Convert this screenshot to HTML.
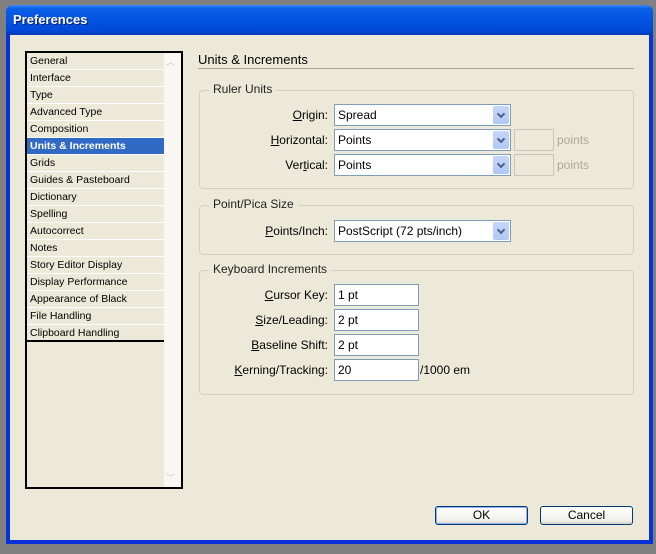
<!DOCTYPE html>
<html><head><style>
*{margin:0;padding:0;box-sizing:border-box}
body{width:656px;height:554px;background:#808080;position:relative;overflow:hidden;font-family:Tahoma,"DejaVu Sans","Liberation Sans",sans-serif;font-size:11px;color:#000}
.a{position:absolute}
#win{left:6px;top:5px;width:647px;height:539px;background:#0831d9;border-radius:7px 7px 0 0}
#title{left:6px;top:5px;width:647px;height:30px;border-radius:7px 7px 0 0;background:linear-gradient(#3d8bff 0,#0a5fe8 12%,#0454e2 50%,#0049d6 85%,#0039b8 100%)}
#title span{position:absolute;left:7px;top:7px;color:#fff;font-weight:bold;font-size:13px;font-family:"Liberation Sans",sans-serif;text-shadow:1px 1px #0a1e70}
#body{left:10px;top:35px;width:639px;height:505px;background:#ece9d8}
#list{left:25px;top:51px;width:158px;height:438px;border:2px solid #000;background:#ece9d8}
.it{position:absolute;left:0;width:137px;height:17px;line-height:16px;padding-left:3px;border-bottom:1px solid #fff;font-size:10.5px;font-family:"Liberation Sans",sans-serif}
.sel{background:#316ac5;color:#fff;font-weight:bold}
#sb{left:164px;top:53px;width:17px;height:434px;background:#f8f7f2}
.grp{position:absolute;border:1px solid #d0d0bf;border-radius:4px}
.gl{position:absolute;background:#ece9d8;padding:0 4px;font-size:12px;font-family:"Liberation Sans",sans-serif;color:#222}
.lb{position:absolute;text-align:right;width:200px;font-size:12px;font-family:"Liberation Sans",sans-serif}
.dd{position:absolute;background:#fff;border:1px solid #7f9db9;height:22px;font-size:12px;font-family:"Liberation Sans",sans-serif;padding:3px 3px}
.dd i{position:absolute;right:1px;top:1px;width:16px;height:18px;background:linear-gradient(#c6d6fb,#b0c8f6);border-radius:2px}
.dd i:after{content:"";position:absolute;left:5px;top:5px;width:4px;height:4px;border-right:2px solid #4d6185;border-bottom:2px solid #4d6185;transform:rotate(45deg)}
.tb{position:absolute;background:#fff;border:1px solid #7f9db9;height:22px;width:85px;font-size:12px;font-family:"Liberation Sans",sans-serif;padding:3px 3px}
.dis{position:absolute;border:1px solid #c9c7ba;width:40px;height:22px}
.gr{position:absolute;color:#aca899;font-size:12px;font-family:"Liberation Sans",sans-serif}
.btn{position:absolute;height:19px;border:1px solid #003c74;border-radius:3px;background:linear-gradient(#fff,#f0f0ea 80%,#d6d0c5);text-align:center;line-height:17px;font-size:12px;font-family:"Liberation Sans",sans-serif}
u{text-decoration:underline}
</style></head><body>
<div id="win" class="a"></div>
<div id="title" class="a"><span>Preferences</span></div>
<div id="body" class="a"></div>

<div id="list" class="a">
<div class="it" style="top:0">General</div>
<div class="it" style="top:17px">Interface</div>
<div class="it" style="top:34px">Type</div>
<div class="it" style="top:51px">Advanced Type</div>
<div class="it" style="top:68px">Composition</div>
<div class="it sel" style="top:85px">Units &amp; Increments</div>
<div class="it" style="top:102px">Grids</div>
<div class="it" style="top:119px">Guides &amp; Pasteboard</div>
<div class="it" style="top:136px">Dictionary</div>
<div class="it" style="top:153px">Spelling</div>
<div class="it" style="top:170px">Autocorrect</div>
<div class="it" style="top:187px">Notes</div>
<div class="it" style="top:204px">Story Editor Display</div>
<div class="it" style="top:221px">Display Performance</div>
<div class="it" style="top:238px">Appearance of Black</div>
<div class="it" style="top:255px">File Handling</div>
<div class="it" style="top:272px;border-bottom:2px solid #000">Clipboard Handling</div>
</div>
<div id="sb" class="a"><div class="a" style="left:2px;top:2px;color:#c8c8c0;font-size:9px">︿</div><div class="a" style="left:2px;bottom:3px;color:#c8c8c0;font-size:9px">﹀</div></div>

<div class="a" style="left:198px;top:52px;font-size:13px;font-family:'Liberation Sans',sans-serif">Units &amp; Increments</div>
<div class="a" style="left:198px;top:68px;width:436px;height:1px;background:#aca899"></div>

<div class="grp" style="left:199px;top:90px;width:435px;height:99px"></div>
<div class="gl" style="left:209px;top:82px">Ruler Units</div>
<div class="lb" style="left:128px;top:108px"><u>O</u>rigin:</div>
<div class="dd" style="left:334px;top:104px;width:177px">Spread<i></i></div>
<div class="lb" style="left:128px;top:133px"><u>H</u>orizontal:</div>
<div class="dd" style="left:334px;top:129px;width:177px">Points<i></i></div>
<div class="dis" style="left:514px;top:129px"></div><div class="gr" style="left:557px;top:133px">points</div>
<div class="lb" style="left:128px;top:158px">Ver<u>t</u>ical:</div>
<div class="dd" style="left:334px;top:154px;width:177px">Points<i></i></div>
<div class="dis" style="left:514px;top:154px"></div><div class="gr" style="left:557px;top:158px">points</div>

<div class="grp" style="left:199px;top:205px;width:435px;height:50px"></div>
<div class="gl" style="left:209px;top:197px">Point/Pica Size</div>
<div class="lb" style="left:128px;top:224px"><u>P</u>oints/Inch:</div>
<div class="dd" style="left:334px;top:220px;width:177px">PostScript (72 pts/inch)<i></i></div>

<div class="grp" style="left:199px;top:270px;width:435px;height:125px"></div>
<div class="gl" style="left:209px;top:262px">Keyboard Increments</div>
<div class="lb" style="left:128px;top:288px"><u>C</u>ursor Key:</div>
<div class="tb" style="left:334px;top:284px">1 pt</div>
<div class="lb" style="left:128px;top:313px"><u>S</u>ize/Leading:</div>
<div class="tb" style="left:334px;top:309px">2 pt</div>
<div class="lb" style="left:128px;top:338px"><u>B</u>aseline Shift:</div>
<div class="tb" style="left:334px;top:334px">2 pt</div>
<div class="lb" style="left:128px;top:363px"><u>K</u>erning/Tracking:</div>
<div class="tb" style="left:334px;top:359px">20</div>
<div class="a" style="left:420px;top:363px;font-size:12px;font-family:'Liberation Sans',sans-serif">/1000 em</div>

<div class="btn" style="left:435px;top:506px;width:93px;box-shadow:inset 0 0 0 1px #8fb0ea">OK</div>
<div class="btn" style="left:540px;top:506px;width:93px">Cancel</div>
</body></html>
